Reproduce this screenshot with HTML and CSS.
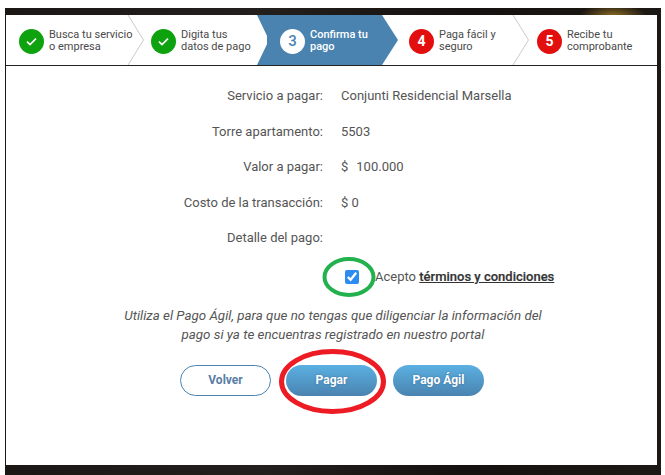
FILE: index.html
```html
<!DOCTYPE html>
<html lang="es">
<head>
<meta charset="utf-8">
<title>Confirma tu pago</title>
<link rel="stylesheet" href="styles.css">
</head>
<body>
<div class="frame">
  <main class="card">
    <nav class="steps">
      <div class="step step-a">
        <span class="dot dot-done"><svg width="13" height="11" viewBox="0 0 13 11"><path d="M2 5.6 5 8.6 11 2.6" fill="none" stroke="#fff" stroke-width="1.6"/></svg></span>
        <span class="step-text">Busca tu servicio<br>o empresa</span>
        <svg class="chev" width="18" height="50" viewBox="0 0 18 50"><path d="M1 0 16.5 25 1 50" fill="none" stroke="#c9c9c9" stroke-width="1"/></svg>
      </div>
      <div class="step step-b">
        <span class="dot dot-done"><svg width="13" height="11" viewBox="0 0 13 11"><path d="M2 5.6 5 8.6 11 2.6" fill="none" stroke="#fff" stroke-width="1.6"/></svg></span>
        <span class="step-text">Digita tus<br>datos de pago</span>
      </div>
      <div class="step step-c">
        <span class="dot dot-current">3</span>
        <span class="step-text">Confirma tu<br>pago</span>
      </div>
      <div class="step step-d">
        <span class="dot dot-todo">4</span>
        <span class="step-text">Paga fácil y<br>seguro</span>
        <svg class="chev" width="18" height="50" viewBox="0 0 18 50"><path d="M1 0 16.5 25 1 50" fill="none" stroke="#c9c9c9" stroke-width="1"/></svg>
      </div>
      <div class="step step-e">
        <span class="dot dot-todo">5</span>
        <span class="step-text">Recibe tu<br>comprobante</span>
      </div>
    </nav>
    <section class="content">
      <dl class="details">
        <dt>Servicio a pagar:</dt><dd>Conjunti Residencial Marsella</dd>
        <dt>Torre apartamento:</dt><dd>5503</dd>
        <dt>Valor a pagar:</dt><dd><span class="currency">$</span>100.000</dd>
        <dt>Costo de la transacción:</dt><dd>$ 0</dd>
        <dt>Detalle del pago:</dt><dd></dd>
      </dl>
      <div class="terms">
        <span class="check-wrap">
          <input class="check" type="checkbox" checked>
          <svg class="ring" width="56" height="44" viewBox="0 0 56 44"><ellipse cx="28" cy="22" rx="24.5" ry="18" fill="none" stroke="#22b14c" stroke-width="4"/></svg>
        </span>
        <span class="terms-text">Acepto <a href="#">términos y condiciones</a></span>
      </div>
      <p class="note">Utiliza el Pago Ágil, para que no tengas que diligenciar la información del<br>pago si ya te encuentras registrado en nuestro portal</p>
      <div class="actions">
        <button class="btn btn-outline">Volver</button>
        <span class="btn-wrap">
          <button class="btn btn-fill">Pagar</button>
          <svg class="ring-red" width="110" height="68" viewBox="0 0 110 68"><ellipse cx="54.5" cy="33.5" rx="51" ry="30" fill="none" stroke="#ed1c24" stroke-width="5"/></svg>
        </span>
        <button class="btn btn-fill">Pago Ágil</button>
      </div>
    </section>
  </main>
</div>
</body>
</html>
```
FILE: styles.css
```css
* { box-sizing: border-box; }
html, body { height: 100%; }
body {
  margin: 0;
  background: #fff;
  font-family: Roboto, "Liberation Sans", sans-serif;
  overflow: hidden;
}
.frame {
  margin: 8px 4px 0 5px;
  height: 467px;
  padding: 7px 4px 10px 1px;
  background:
    radial-gradient(ellipse 34px 12px at 608px 8px, #8d6c24 0%, rgba(141,108,36,0) 100%),
    linear-gradient(90deg, #1b1715 0%, #231f1c 40%, #15110e 70%, #1c1814 100%);
}
.card {
  height: 450px;
  background: #fff;
  display: flex;
  flex-direction: column;
}
.steps {
  display: flex;
  height: 51px;
  flex: none;
  border-bottom: 1px solid #222;
  overflow: hidden;
}
.step {
  position: relative;
  display: flex;
  align-items: center;
  gap: 5px;
  height: 50px;
  padding: 2px 0 0 13px;
  font-size: 11px;
  line-height: 12px;
  color: #4a4a4a;
}
.step-a { width: 132px; }
.step-b { width: 129px; }
.step-c { width: 115px; color: #fff; font-weight: 500; background: #4a83b0; z-index: 1; }
.step-c::before,
.step-c::after {
  content: "";
  position: absolute;
  top: 0;
  height: 50px;
  width: 16px;
  background: #4a83b0;
}
.step-c::before { left: -10px; clip-path: polygon(0 0, 16px 0, 16px 100%, 0 100%, 12px 50%); }
.step-c::after { right: -16px; clip-path: polygon(0 0, 100% 50%, 0 100%); }
.step-d { width: 142px; padding-left: 27px; }
.step-e { flex: 1; }
.chev { position: absolute; top: 0; right: -7px; }
.step-d .chev { right: -6px; }
.dot {
  flex: none;
  width: 25px;
  height: 25px;
  border-radius: 50%;
  display: flex;
  align-items: center;
  justify-content: center;
  font-size: 14px;
}
.step-text { white-space: nowrap; }
.dot-done { background: #0ea20e; }
.dot-current { background: #fff; color: #4a83b0; font-size: 15px; font-weight: 500; }
.dot-todo { background: #e30f0f; color: #fff; font-weight: 700; }
.content {
  flex: 1;
  padding-top: 12px;
  color: #555;
  font-size: 13px;
}
.details {
  display: grid;
  grid-template-columns: 317px 1fr;
  grid-auto-rows: 35.5px;
  column-gap: 18px;
  align-items: center;
  margin: 0;
}
.details dt { text-align: right; }
.details dd { margin: 0; }
.currency { margin-right: 8px; }
.terms {
  display: flex;
  align-items: center;
  height: 20px;
  margin-top: 11px;
  padding-left: 339px;
}
.check-wrap {
  position: relative;
  display: flex;
  width: 30px;
  flex: none;
}
.check {
  width: 14px;
  height: 14px;
  margin: 0;
  accent-color: #2d8cf0;
}
.ring { position: absolute; left: -24px; top: -15px; }
.terms-text { color: #555; }
.terms-text a { color: #333; font-weight: 500; text-decoration: underline; -webkit-text-stroke: 0.2px #333; }
.note {
  margin: 19px 0 0;
  width: 654px;
  text-align: center;
  font-style: italic;
  font-size: 13.35px;
  line-height: 19px;
  color: #555;
}
.actions {
  display: flex;
  gap: 15px;
  margin-top: 21px;
  padding-left: 174px;
}
.btn-wrap { position: relative; display: flex; margin-right: 1px; }
.btn {
  width: 91px;
  height: 31px;
  border-radius: 16px;
  font-family: inherit;
  font-size: 12px;
  font-weight: 700;
  padding: 0;
}
.btn-outline { background: #fff; border: 1px solid #4a83b0; color: #5a7ea6; }
.btn-fill {
  border: 0;
  color: #fff;
  text-shadow: 0 0 2px rgba(40, 80, 120, 0.6);
  background: linear-gradient(180deg, #5bb0e2 0%, #4a83b0 100%);
}
.ring-red { position: absolute; left: -8px; top: -17px; pointer-events: none; }
```
